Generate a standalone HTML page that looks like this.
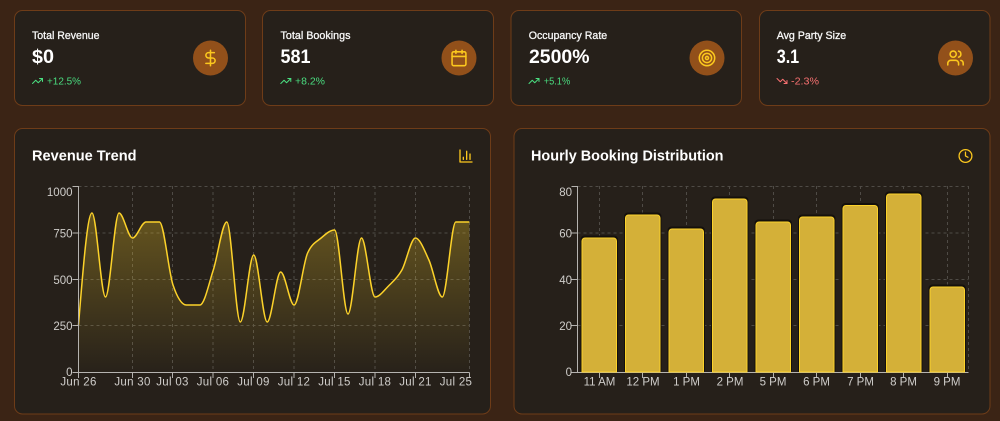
<!DOCTYPE html>
<html lang="en">
<head>
<meta charset="utf-8">
<title>Dashboard</title>
<style>
html,body{margin:0;padding:0;background:#3b2415;width:1000px;height:421px;overflow:hidden}
svg{display:block}
text{font-family:"Liberation Sans",sans-serif}
.lab{font-size:11px;fill:#f7f7f7;stroke:#f7f7f7;stroke-width:.3}
.val{font-size:19px;font-weight:700;fill:#fff}
.up{font-size:10.5px;fill:#4ade80}
.dn{font-size:10.5px;fill:#f87171}
.ttl{font-size:14.5px;font-weight:700;fill:#fff}
.tk{font-size:11.5px;fill:#cfcdca}
.wide{letter-spacing:.3px}
.e{text-anchor:end}
.m{text-anchor:middle}
.card{fill:#26201a;stroke:#6e3c18;stroke-width:1}
.circ{fill:#92501a}
.ic{fill:none;stroke:#fcc81e;stroke-width:2;stroke-linecap:round;stroke-linejoin:round}
.grid{stroke:#4f4b46;stroke-width:1;stroke-dasharray:3 3;fill:none}
.ax{stroke:#b5b3b0;stroke-width:1;fill:none}
.bar{fill:#d4b038;stroke:#fcd22a;stroke-width:1}
.halo{fill:none;stroke:#14100c;stroke-width:1}
</style>
</head>
<body>
<svg width="1000" height="421" viewBox="0 0 1000 421" xmlns="http://www.w3.org/2000/svg">
<defs>
<linearGradient id="ag" x1="0" y1="0" x2="0" y2="1">
<stop offset="0" stop-color="#fcd22a" stop-opacity=".3"/>
<stop offset="1" stop-color="#fcd22a" stop-opacity=".01"/>
</linearGradient>
</defs>

<!-- KPI cards -->
<rect class="card" x="14.5" y="10.5" width="231" height="95" rx="8"/>
<rect class="card" x="262.5" y="10.5" width="231" height="95" rx="8"/>
<rect class="card" x="511" y="10.5" width="230.5" height="95" rx="8"/>
<rect class="card" x="759.5" y="10.5" width="230.5" height="95" rx="8"/>

<text class="lab" x="32" y="39" textLength="67.5" lengthAdjust="spacingAndGlyphs">Total Revenue</text>
<text class="val" x="32" y="63" textLength="22" lengthAdjust="spacingAndGlyphs">$0</text>
<text class="up" x="47" y="84.5" textLength="34" lengthAdjust="spacingAndGlyphs">+12.5%</text>

<text class="lab" x="280.5" y="39" textLength="70" lengthAdjust="spacingAndGlyphs">Total Bookings</text>
<text class="val" x="280.5" y="63" textLength="30" lengthAdjust="spacingAndGlyphs">581</text>
<text class="up" x="295" y="84.5" textLength="30" lengthAdjust="spacingAndGlyphs">+8.2%</text>

<text class="lab" x="528.7" y="39" textLength="78.5" lengthAdjust="spacingAndGlyphs">Occupancy Rate</text>
<text class="val" x="529" y="63" textLength="60.5" lengthAdjust="spacingAndGlyphs">2500%</text>
<text class="up" x="543.7" y="84.5" textLength="26.5" lengthAdjust="spacingAndGlyphs">+5.1%</text>

<text class="lab" x="776.7" y="39" textLength="69.5" lengthAdjust="spacingAndGlyphs">Avg Party Size</text>
<text class="val" x="776.7" y="63" textLength="22.5" lengthAdjust="spacingAndGlyphs">3.1</text>
<text class="dn" x="791" y="84.5" textLength="28" lengthAdjust="spacingAndGlyphs">-2.3%</text>

<!-- trend icons -->
<g fill="none" stroke="#4ade80" stroke-width="2" stroke-linecap="round" stroke-linejoin="round">
<g transform="translate(31.5,75) scale(.5)"><polyline points="22 7 13.5 15.5 8.5 10.5 2 17"/><polyline points="16 7 22 7 22 13"/></g>
<g transform="translate(279.8,75) scale(.5)"><polyline points="22 7 13.5 15.5 8.5 10.5 2 17"/><polyline points="16 7 22 7 22 13"/></g>
<g transform="translate(528,75) scale(.5)"><polyline points="22 7 13.5 15.5 8.5 10.5 2 17"/><polyline points="16 7 22 7 22 13"/></g>
</g>
<g fill="none" stroke="#f87171" stroke-width="2" stroke-linecap="round" stroke-linejoin="round" transform="translate(776,75) scale(.5)"><polyline points="22 17 13.5 8.5 8.5 13.5 2 7"/><polyline points="16 17 22 17 22 11"/></g>

<!-- KPI icon circles -->
<circle class="circ" cx="210.5" cy="58" r="17.5"/>
<circle class="circ" cx="459" cy="58" r="17.5"/>
<circle class="circ" cx="707" cy="58" r="17.5"/>
<circle class="circ" cx="955.5" cy="58" r="17.5"/>

<g class="ic" transform="translate(201.25,48.75) scale(.77)"><line x1="12" y1="2" x2="12" y2="22"/><path d="M17 5H9.5a3.5 3.5 0 0 0 0 7h5a3.5 3.5 0 0 1 0 7H6"/></g>
<g class="ic" transform="translate(449.75,48.75) scale(.77)"><rect x="3" y="4" width="18" height="18" rx="2"/><path d="M16 2v4"/><path d="M8 2v4"/><path d="M3 10h18"/></g>
<g class="ic" transform="translate(697.75,48.75) scale(.77)"><circle cx="12" cy="12" r="10"/><circle cx="12" cy="12" r="6"/><circle cx="12" cy="12" r="2"/></g>
<g class="ic" transform="translate(946.25,48.75) scale(.77)"><path d="M16 21v-2a4 4 0 0 0-4-4H6a4 4 0 0 0-4 4v2"/><circle cx="9" cy="7" r="4"/><path d="M22 21v-2a4 4 0 0 0-3-3.87"/><path d="M16 3.13a4 4 0 0 1 0 7.75"/></g>

<!-- Chart cards -->
<rect class="card" x="14.5" y="128.5" width="476" height="285.5" rx="8"/>
<rect class="card" x="514" y="128.5" width="476" height="285.5" rx="8"/>

<text class="ttl" x="32" y="160.7" textLength="104.5" lengthAdjust="spacingAndGlyphs">Revenue Trend</text>
<text class="ttl" x="531" y="160.7" textLength="192.5" lengthAdjust="spacingAndGlyphs">Hourly Booking Distribution</text>

<g class="ic" transform="translate(458,148) scale(.6667)"><path d="M3 3v18h18"/><path d="M18 17V9"/><path d="M13 17V5"/><path d="M8 17v-3"/></g>
<g class="ic" transform="translate(957.8,148.3) scale(.64)"><circle cx="12" cy="12" r="10"/><polyline points="12 6 12 12 16 14"/></g>

<!-- Chart 1 grid -->
<path class="grid" d="M78.5 186.5H469.5M78.5 233H469.5M78.5 279.5H469.5M78.5 325.5H469.5"/>
<path class="grid" d="M132.5 186V372M172.5 186V372M213 186V372M253.5 186V372M294 186V372M334.5 186V372M375 186V372M415.5 186V372M469.5 186V372"/>

<!-- Chart 1 area + line -->
<path fill="url(#ag)" d="M78.5,325C83,269 87.5,213 92,213C96.5,213 101,297 105.5,297C110,297 114.5,213 119,213C123.5,213 128,238 132.5,238C137,238 141.5,222 146,222C150.5,222 155,222 159.4,222C164,222 168.5,271.7 173,285C177.5,298.3 182,305 186.4,305C191,305 195.4,305 199.9,305C204.4,305 208.8,283.8 213.3,270C217.8,256.2 222.3,222 226.8,222C231.3,222 235.8,322 240.3,322C244.8,322 249.2,255 253.7,255C258.2,255 262.7,322 267.2,322C271.7,322 276.2,272 280.7,272C285.2,272 289.6,305 294.1,305C298.6,305 303.1,263 307.6,253C312.1,243 316.6,241.8 321.1,238C325.6,234.2 330.1,230 334.6,230C339.1,230 343.5,314 348,314C352.5,314 357,238 361.5,238C366,238 370.5,297 375,297C379.5,297 384,290.5 388.5,286C393,281.5 397.4,278 401.9,270C406.4,262 410.9,238 415.4,238C419.9,238 424.4,250.2 428.9,260C433.4,269.8 437.8,297 442.3,297C446.8,297 451.3,222 455.8,222C460.3,222 464.8,222 469.3,222L469.3,372L78.5,372Z"/>
<path fill="none" stroke="#fcd22a" stroke-width="1.5" d="M78.5,325C83,269 87.5,213 92,213C96.5,213 101,297 105.5,297C110,297 114.5,213 119,213C123.5,213 128,238 132.5,238C137,238 141.5,222 146,222C150.5,222 155,222 159.4,222C164,222 168.5,271.7 173,285C177.5,298.3 182,305 186.4,305C191,305 195.4,305 199.9,305C204.4,305 208.8,283.8 213.3,270C217.8,256.2 222.3,222 226.8,222C231.3,222 235.8,322 240.3,322C244.8,322 249.2,255 253.7,255C258.2,255 262.7,322 267.2,322C271.7,322 276.2,272 280.7,272C285.2,272 289.6,305 294.1,305C298.6,305 303.1,263 307.6,253C312.1,243 316.6,241.8 321.1,238C325.6,234.2 330.1,230 334.6,230C339.1,230 343.5,314 348,314C352.5,314 357,238 361.5,238C366,238 370.5,297 375,297C379.5,297 384,290.5 388.5,286C393,281.5 397.4,278 401.9,270C406.4,262 410.9,238 415.4,238C419.9,238 424.4,250.2 428.9,260C433.4,269.8 437.8,297 442.3,297C446.8,297 451.3,222 455.8,222C460.3,222 464.8,222 469.3,222"/>

<!-- Chart 1 axes -->
<path class="ax" d="M78.5 186V372.5H469.5M72.5 186.5H78.5M72.5 233H78.5M72.5 279.5H78.5M72.5 325.5H78.5M72.5 372.5H78.5M78.5 372.5V378M132.5 372.5V378M172.5 372.5V378M213 372.5V378M253.5 372.5V378M294 372.5V378M334.5 372.5V378M375 372.5V378M415.5 372.5V378M469.5 372.5V378"/>
<text class="tk e" x="72.5" y="196">1000</text>
<text class="tk e" x="72.5" y="237.7">750</text>
<text class="tk e" x="72.5" y="284">500</text>
<text class="tk e" x="72.5" y="330">250</text>
<text class="tk e" x="72.5" y="376">0</text>
<text class="tk m wide" x="78.5" y="385.7">Jun 26</text>
<text class="tk m wide" x="132.5" y="385.7">Jun 30</text>
<text class="tk m wide" x="172.5" y="385.7">Jul 03</text>
<text class="tk m wide" x="213" y="385.7">Jul 06</text>
<text class="tk m wide" x="253.5" y="385.7">Jul 09</text>
<text class="tk m wide" x="294" y="385.7">Jul 12</text>
<text class="tk m wide" x="334.5" y="385.7">Jul 15</text>
<text class="tk m wide" x="375" y="385.7">Jul 18</text>
<text class="tk m wide" x="415.5" y="385.7">Jul 21</text>
<text class="tk m wide" x="456" y="385.7">Jul 25</text>

<!-- Chart 2 grid -->
<path class="grid" d="M577.5 186.5H968.5M577.5 233H968.5M577.5 279.5H968.5M577.5 325.5H968.5"/>
<path class="grid" d="M599.5 186V372M642.5 186V372M686.5 186V372M729.5 186V372M773.5 186V372M816.5 186V372M860.5 186V372M903.5 186V372M947.5 186V372M968.5 186V372"/>

<!-- Chart 2 axes -->
<path class="ax" d="M577.5 186V372.5H968.5M571.5 186.5H577.5M571.5 233H577.5M571.5 279.5H577.5M571.5 325.5H577.5M571.5 372.5H577.5M599.5 372.5V378M642.5 372.5V378M686.5 372.5V378M729.5 372.5V378M773.5 372.5V378M816.5 372.5V378M860.5 372.5V378M903.5 372.5V378M947.5 372.5V378"/>

<!-- Bars -->
<g class="halo">
<path d="M581.5 372V240a3 3 0 0 1 3-3H614a3 3 0 0 1 3 3V372" transform="translate(0,-.5)" stroke-width="2"/>
<path d="M625 372V217a3 3 0 0 1 3-3H657.5a3 3 0 0 1 3 3V372" transform="translate(0,-.5)" stroke-width="2"/>
<path d="M668.5 372V231a3 3 0 0 1 3-3H701a3 3 0 0 1 3 3V372" transform="translate(0,-.5)" stroke-width="2"/>
<path d="M712 372V201a3 3 0 0 1 3-3H744.5a3 3 0 0 1 3 3V372" transform="translate(0,-.5)" stroke-width="2"/>
<path d="M755.5 372V224a3 3 0 0 1 3-3H788a3 3 0 0 1 3 3V372" transform="translate(0,-.5)" stroke-width="2"/>
<path d="M799 372V219a3 3 0 0 1 3-3H831.5a3 3 0 0 1 3 3V372" transform="translate(0,-.5)" stroke-width="2"/>
<path d="M842.5 372V207.5a3 3 0 0 1 3-3H875a3 3 0 0 1 3 3V372" transform="translate(0,-.5)" stroke-width="2"/>
<path d="M886 372V196a3 3 0 0 1 3-3H918.5a3 3 0 0 1 3 3V372" transform="translate(0,-.5)" stroke-width="2"/>
<path d="M929.5 372V289a3 3 0 0 1 3-3H962a3 3 0 0 1 3 3V372" transform="translate(0,-.5)" stroke-width="2"/>
</g>
<path class="bar" d="M582 372V241a3 3 0 0 1 3-3H613.5a3 3 0 0 1 3 3V372Z"/>
<path class="bar" d="M625.5 372V218a3 3 0 0 1 3-3H657a3 3 0 0 1 3 3V372Z"/>
<path class="bar" d="M669 372V232a3 3 0 0 1 3-3H700.5a3 3 0 0 1 3 3V372Z"/>
<path class="bar" d="M712.5 372V202a3 3 0 0 1 3-3H744a3 3 0 0 1 3 3V372Z"/>
<path class="bar" d="M756 372V225a3 3 0 0 1 3-3H787.5a3 3 0 0 1 3 3V372Z"/>
<path class="bar" d="M799.5 372V220a3 3 0 0 1 3-3H831a3 3 0 0 1 3 3V372Z"/>
<path class="bar" d="M843 372V208.5a3 3 0 0 1 3-3H874.5a3 3 0 0 1 3 3V372Z"/>
<path class="bar" d="M886.5 372V197a3 3 0 0 1 3-3H918a3 3 0 0 1 3 3V372Z"/>
<path class="bar" d="M930 372V290a3 3 0 0 1 3-3H961.5a3 3 0 0 1 3 3V372Z"/>

<text class="tk e" x="572" y="196">80</text>
<text class="tk e" x="572" y="237.7">60</text>
<text class="tk e" x="572" y="284">40</text>
<text class="tk e" x="572" y="330">20</text>
<text class="tk e" x="572" y="376">0</text>
<text class="tk m" x="599.5" y="385.7">11 AM</text>
<text class="tk m" x="643" y="385.7">12 PM</text>
<text class="tk m" x="686.5" y="385.7">1 PM</text>
<text class="tk m" x="730" y="385.7">2 PM</text>
<text class="tk m" x="773" y="385.7">5 PM</text>
<text class="tk m" x="816.5" y="385.7">6 PM</text>
<text class="tk m" x="860.5" y="385.7">7 PM</text>
<text class="tk m" x="903.5" y="385.7">8 PM</text>
<text class="tk m" x="947" y="385.7">9 PM</text>
</svg>
</body>
</html>
